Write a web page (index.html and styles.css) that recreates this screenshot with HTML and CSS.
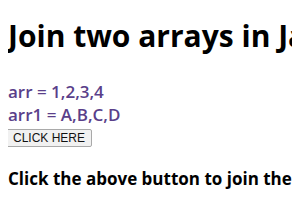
FILE: index.html
```html
<!DOCTYPE html>
<html lang="en">
<head>
    <meta charset="UTF-8">
    <title>Join two arrays</title>
    <link rel="stylesheet" href="styles.css">
</head>
<body>
    <h1>Join two arrays in JavaScript</h1>
    <div class="sample">arr = 1,2,3,4</div>
    <div class="sample">arr1 = A,B,C,D</div>
    <button class="btn">CLICK HERE</button>
    <h3>Click the above button to join the arrays</h3>
</body>
</html>
```

FILE: styles.css
```css
body {
    font-family: 'Open Sans', sans-serif;
    margin: 8px;
    white-space: nowrap;
    overflow: hidden;
    color: #000;
}
h1 {
    font-size: 30px;
    line-height: 34px;
    font-weight: bold;
    margin: 11px 0 27px;
}
.sample {
    font-size: 17px;
    font-weight: 600;
    color: #5a3f8a;
    line-height: 23px;
}
.btn {
    display: block;
    font-family: 'Liberation Sans', Arial, sans-serif;
    font-size: 12px;
    line-height: 14px;
    padding: 1px 6px;
    margin: 3px 0 0 -2px;
    background: #f1f1f1;
    border: 1px solid #a9a9a9;
    border-radius: 2px;
    color: #111;
}
h3 {
    font-size: 17px;
    line-height: 23px;
    font-weight: bold;
    margin: 20px 0 0;
}
```
